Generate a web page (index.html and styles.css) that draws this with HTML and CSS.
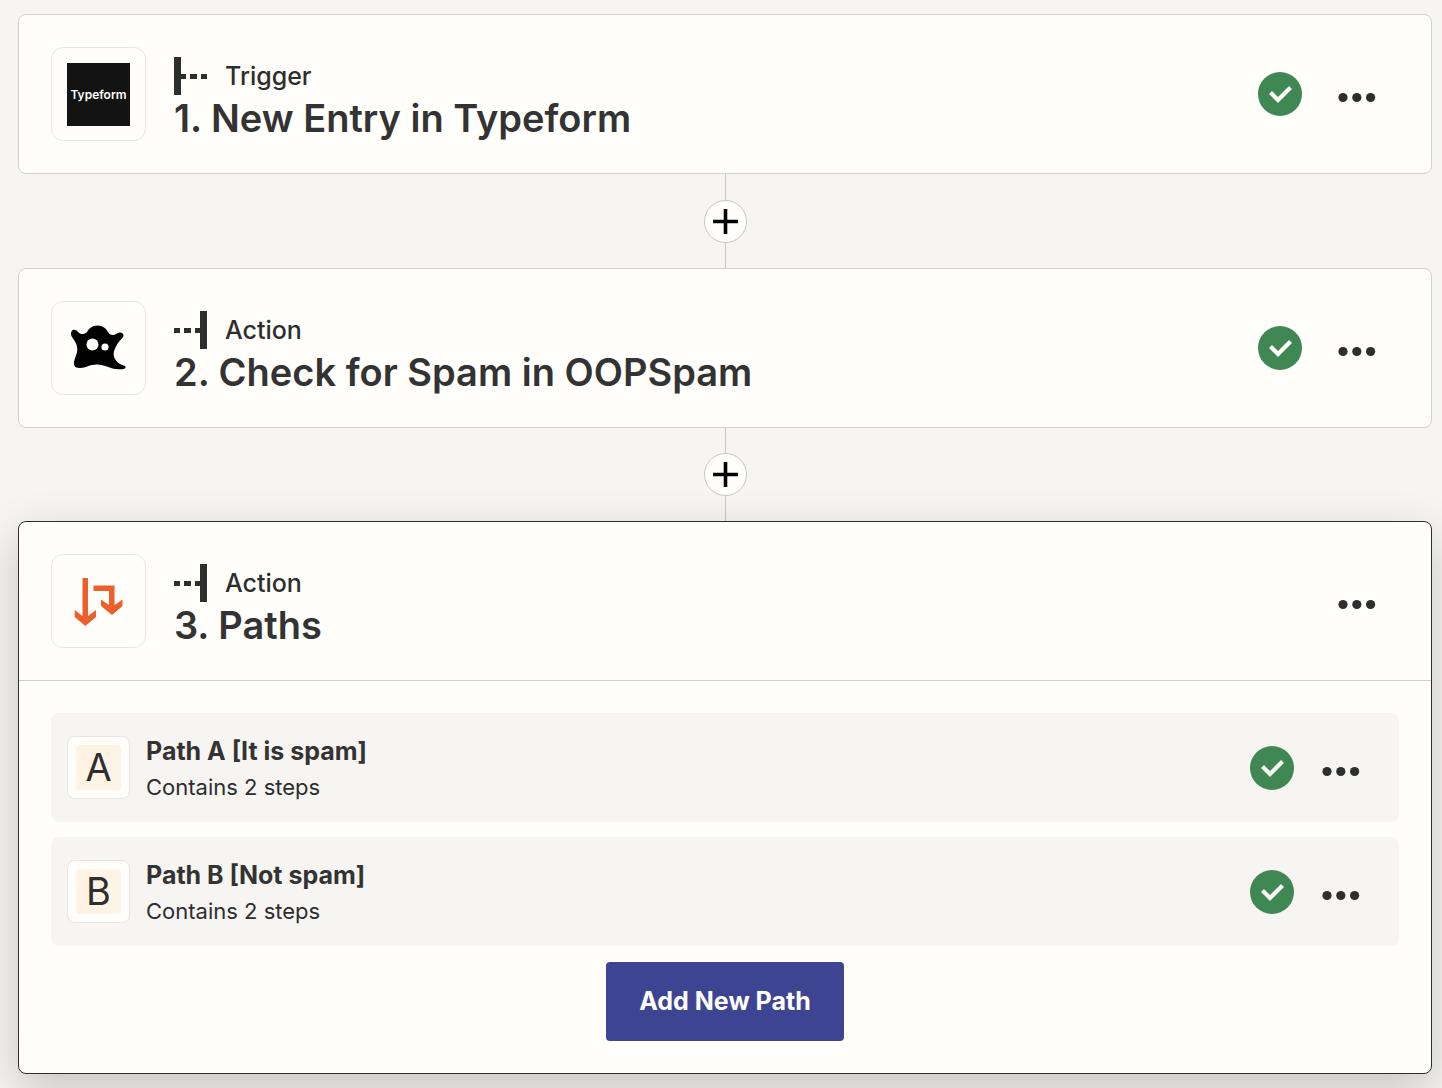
FILE: index.html
```html
<!DOCTYPE html>
<html lang="en">
<head>
<meta charset="utf-8">
<meta name="viewport" content="width=device-width, initial-scale=1">
<title>Zap editor</title>
<link rel="stylesheet" href="styles.css">
</head>
<body>
<svg class="symbols" aria-hidden="true">
  <symbol id="check" viewBox="0 0 44 44"><circle cx="22" cy="22" r="22" fill="#3f8753"/><path d="M12.500 20.500 L20 28 L32.500 15.500" fill="none" stroke="currentColor" stroke-width="4.200"/></symbol>
  <symbol id="dots" viewBox="0 0 40 40"><circle cx="6" cy="23.500" r="4.600"/><circle cx="19.800" cy="23.500" r="4.600"/><circle cx="33.600" cy="23.500" r="4.600"/></symbol>
  <symbol id="action" viewBox="0 0 34 38"><path d="M26 0h7v38h-7zM0 17h6v5H0zM10 17h7v5h-7zM21 17h6v5h-6z"/></symbol>
  <symbol id="trigger" viewBox="0 0 34 38"><path d="M0 0h7v38H0zM7 17h5v5H7zM16 17h7v5h-7zM27 17h6v5h-6z"/></symbol>
  <symbol id="plus" viewBox="0 0 27 27"><path d="M13.500 1v25M1 13.500h25" stroke="#000" stroke-width="3.600"/></symbol>
</svg>
<main class="flow">
  <section class="card">
    <header class="step">
      <div class="app"><div class="typeform">Typeform</div></div>
      <div class="info">
        <p class="kind"><svg class="kind-icon"><use href="#trigger"/></svg>Trigger</p>
        <h2 class="title">1. New Entry in Typeform</h2>
      </div>
      <svg class="check" role="img" aria-label="Complete"><use href="#check"/></svg>
      <button class="more" aria-label="More options"><svg class="dots"><use href="#dots"/></svg></button>
    </header>
  </section>
  <div class="connector"><button class="add" aria-label="Add step"><svg class="plus"><use href="#plus"/></svg></button></div>
  <section class="card">
    <header class="step">
      <div class="app">
        <svg class="logo" viewBox="0 0 64 64"><path fill="#000" d="M4.500 15.500C5.500 13 9 13.500 11 16C13 18.500 17 19 20 16C22 12.500 25 9.500 30.500 9.500C36 9.500 39 12.500 41 16C43.500 20 47 19.500 50 17.500C53 15.500 57 17 56.500 20C56 22 54 23 52.500 25C50 28 48.500 31 47 35C45.500 41 49 46 54 48.500C57 50 59 49.500 58.500 51.500C58 53.500 54 53.500 49 53C42 52.500 38 48.500 30 48.500C22 48.500 19 52 13 52C7 52 6 48.500 7.500 44C9 39 11 36 10 31C9.500 27 8 25.500 6 22.500C4 20.500 3.500 17.500 4.500 15.500Z"/><circle cx="25.500" cy="28.500" r="6" fill="#fffefb"/><circle cx="38" cy="31" r="3.600" fill="#fffefb"/></svg>
      </div>
      <div class="info">
        <p class="kind"><svg class="kind-icon"><use href="#action"/></svg>Action</p>
        <h2 class="title">2. Check for Spam in OOPSpam</h2>
      </div>
      <svg class="check" role="img" aria-label="Complete"><use href="#check"/></svg>
      <button class="more" aria-label="More options"><svg class="dots"><use href="#dots"/></svg></button>
    </header>
  </section>
  <div class="connector connector-last"><button class="add" aria-label="Add step"><svg class="plus"><use href="#plus"/></svg></button></div>
  <section class="card card-open">
    <header class="step">
      <div class="app">
        <svg class="logo" viewBox="0 0 64 64" fill="#ed5f2b"><path d="M15.500 9H21v38l8-6v7L18.300 57L7.700 48v-7l7.800 6z"/><path d="M26.500 16.500H47.500V36l8-5.500V37L45 46L34 37V30.500l8 5.500V22H26.500z"/></svg>
      </div>
      <div class="info">
        <p class="kind"><svg class="kind-icon"><use href="#action"/></svg>Action</p>
        <h2 class="title">3. Paths</h2>
      </div>
      <button class="more" aria-label="More options"><svg class="dots"><use href="#dots"/></svg></button>
    </header>
    <div class="paths">
      <ul class="path-list">
        <li class="path">
          <div class="badge"><span class="letter">A</span></div>
          <div class="info"><h3 class="name">Path A [It is spam]</h3><p class="detail">Contains 2 steps</p></div>
          <svg class="check" role="img" aria-label="Complete"><use href="#check"/></svg>
          <button class="more" aria-label="More options"><svg class="dots"><use href="#dots"/></svg></button>
        </li>
        <li class="path">
          <div class="badge"><span class="letter">B</span></div>
          <div class="info"><h3 class="name">Path B [Not spam]</h3><p class="detail">Contains 2 steps</p></div>
          <svg class="check" role="img" aria-label="Complete"><use href="#check"/></svg>
          <button class="more" aria-label="More options"><svg class="dots"><use href="#dots"/></svg></button>
        </li>
      </ul>
      <button class="new-path">Add New Path</button>
    </div>
  </section>
</main>
</body>
</html>
```
FILE: styles.css
```css
* { box-sizing: border-box; margin: 0; padding: 0; }

body {
  background: #f6f5f2;
  color: #2d2e2e;
  font-family: Inter, "Liberation Sans", sans-serif;
}

button { border: 0; background: none; font: inherit; color: inherit; cursor: pointer; }
svg { display: block; flex: none; }
.symbols { position: absolute; width: 0; height: 0; }

.flow { padding: 14px 10px 14px 18px; overflow: hidden; }

.card { background: #fffefb; border: 1px solid #d3d2ce; border-radius: 8px; }
.card-open { border-color: #2d2e2e; box-shadow: 0 16px 48px rgba(0, 0, 0, 0.2); }
.card-open .step { border-bottom: 1px solid #cfcecb; }

.step { display: flex; align-items: center; padding: 32px; }

.app {
  display: flex;
  align-items: center;
  justify-content: center;
  flex: none;
  width: 95px;
  height: 94px;
  margin-right: 28px;
  border: 1px solid #e8e7e4;
  border-radius: 12px;
}
.typeform {
  width: 63px;
  background: #131313;
  color: #fff;
  font-size: 12px;
  font-weight: 600;
  line-height: 63px;
  text-align: center;
}
.logo { width: 64px; height: 64px; }

.info { flex: 1; min-width: 0; }
.step .info { align-self: flex-end; }
.kind { display: flex; align-items: center; gap: 17px; font-size: 25px; font-weight: 500; line-height: 38px; }
.kind-icon { width: 34px; height: 38px; fill: currentColor; }
.title { color: #333; font-size: 38px; font-weight: 600; line-height: 46px; }

.check { width: 44px; height: 44px; color: #fffefb; }
.more { display: flex; justify-content: center; width: 84px; margin-left: 13px; }
.dots { width: 40px; height: 40px; fill: currentColor; }

.connector {
  display: flex;
  align-items: center;
  justify-content: center;
  height: 94px;
  background: linear-gradient(#c8c7c4, #c8c7c4) center / 1px 100% no-repeat;
}
.connector-last { height: 93px; }
.add {
  display: flex;
  align-items: center;
  justify-content: center;
  width: 43px;
  height: 43px;
  background: #fffefb;
  border: 1px solid #c8c7c4;
  border-radius: 50%;
}
.plus { width: 27px; height: 27px; }

.paths { display: flex; flex-direction: column; align-items: center; gap: 16px; padding: 32px; }
.path-list { display: grid; gap: 15px; width: 100%; list-style: none; }
.path {
  display: flex;
  align-items: center;
  height: 109px;
  padding: 0 16px;
  background: #f6f5f2;
  border-radius: 8px;
}
.path .info { padding-top: 3px; }
.path .more { margin-left: 5px; }
.path .check { color: #f6f5f2; }
.badge {
  flex: none;
  width: 63px;
  height: 63px;
  margin-right: 16px;
  padding: 8px;
  background: #fffefb;
  border: 1px solid #e8e7e4;
  border-radius: 8px;
}
.letter {
  display: block;
  background: #fff3e6;
  border-radius: 4px;
  font-size: 38px;
  line-height: 45px;
  text-align: center;
}
.name { color: #333; font-size: 25px; font-weight: 700; line-height: 36px; }
.detail { font-size: 22px; line-height: 37px; }

.new-path {
  padding: 0 33px;
  background: #3d4592;
  border-radius: 4px;
  color: #fffefb;
  font-size: 25px;
  font-weight: 700;
  line-height: 79px;
}
```
